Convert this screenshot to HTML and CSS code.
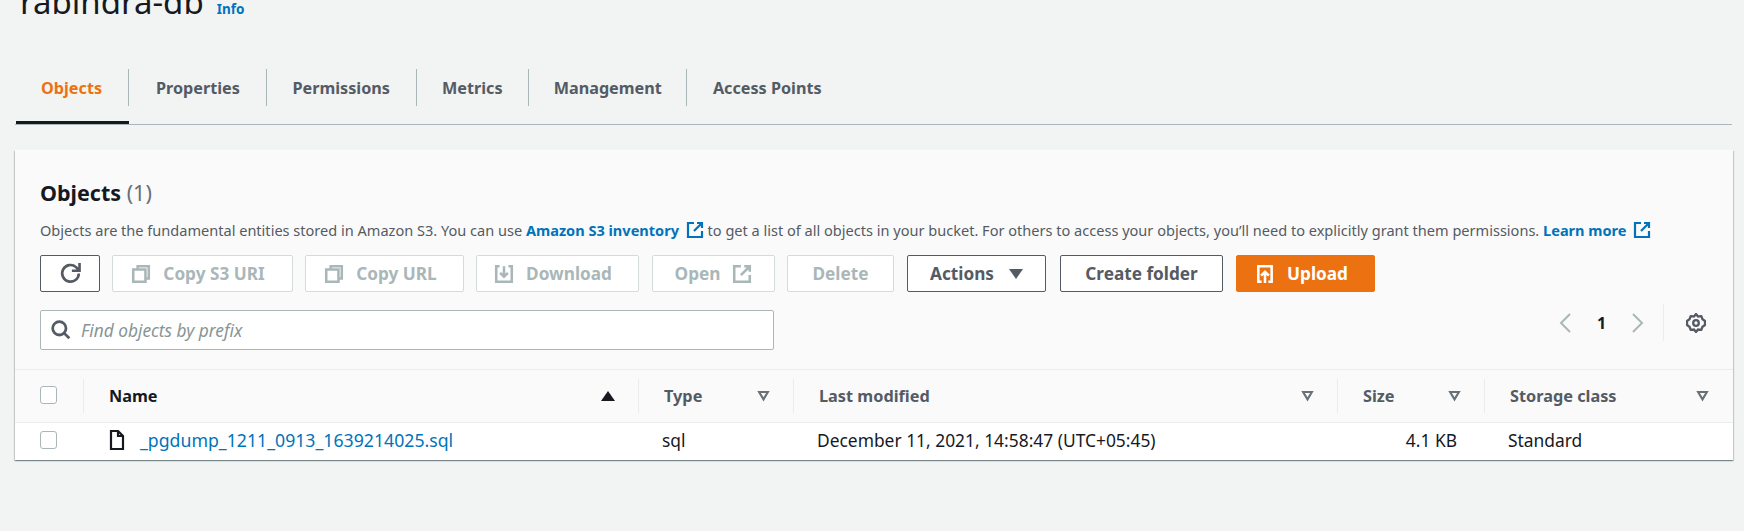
FILE: index.html
```html
<!DOCTYPE html>
<html lang="en">
<head>
  <meta charset="UTF-8">
  <title>rabindra-db</title>
  <link rel="stylesheet" href="styles.css">
</head>
<body>

<div class="title-row">
  <h1 class="bucket-name">rabindra-db</h1>
  <a class="info-link">Info</a>
</div>

<div class="tabs">
  <div class="tab tab-active"><span>Objects</span></div>
  <div class="tab tab-props"><span>Properties</span></div>
  <div class="tab"><span>Permissions</span></div>
  <div class="tab"><span>Metrics</span></div>
  <div class="tab tab-manage"><span>Management</span></div>
  <div class="tab tab-last"><span>Access Points</span></div>
</div>

<div class="card">

  <div class="card-head">
    <h2 class="card-title">Objects <span class="count">(1)</span></h2>
    <p class="desc">Objects are the fundamental entities stored in Amazon S3. You can use <a class="link">Amazon S3 inventory <svg class="ext" viewBox="0 0 18 18"><path d="M8 2H2v14h14v-6M11 2h5v5M16 2L8 10"/></svg></a> to get a list of all objects in your bucket. For others to access your objects, you’ll need to explicitly grant them permissions. <a class="link">Learn more <svg class="ext" viewBox="0 0 18 18"><path d="M8 2H2v14h14v-6M11 2h5v5M16 2L8 10"/></svg></a></p>

    <div class="actions">
      <button class="btn btn-refresh"><svg class="icon-big" viewBox="0 0 18 18"><path d="M15 9a6 6 0 1 1-2-4.600L15.500 7M15.500 1.500V7H10"/></svg></button>
      <button class="btn btn-off btn-s3"><svg class="icon" viewBox="0 0 18 18"><path d="M6 5V2h10v11h-3M2 5h11v11H2z"/></svg>Copy S3 URI</button>
      <button class="btn btn-off btn-url"><svg class="icon" viewBox="0 0 18 18"><path d="M6 5V2h10v11h-3M2 5h11v11H2z"/></svg>Copy URL</button>
      <button class="btn btn-off btn-down"><svg class="icon" viewBox="0 0 18 18"><path d="M5 2H2v14h14V2h-3M9 2v9M5.500 8L9 11.500 12.500 8"/></svg>Download</button>
      <button class="btn btn-off btn-open">Open<svg class="icon" viewBox="0 0 18 18"><path d="M8 2H2v14h14v-6M11 2h5v5M16 2L8 10"/></svg></button>
      <button class="btn btn-off btn-del">Delete</button>
      <button class="btn btn-on btn-act">Actions<span class="caret"></span></button>
      <button class="btn btn-on btn-folder">Create folder</button>
      <button class="btn btn-upload"><svg class="icon" viewBox="0 0 18 18"><path d="M6 16H3V2h12v14h-3M9 17V7M5.500 10.500L9 7l3.500 3.500"/></svg>Upload</button>
    </div>

    <div class="filter-row">
      <div class="search">
        <svg class="search-icon" viewBox="0 0 18 18"><circle cx="7.500" cy="7.500" r="6"/><path d="M11.800 11.800L16.500 16.500"/></svg>
        <span>Find objects by prefix</span>
      </div>
      <div class="pager">
        <svg class="chev" viewBox="0 0 12 20"><path d="M11 1L2 10l9 9"/></svg>
        <span class="page-num">1</span>
        <svg class="chev" viewBox="0 0 12 20"><path d="M1 1l9 9-9 9"/></svg>
      </div>
      <div class="settings">
        <svg class="gear" viewBox="0 0 20 20"><path d="M10 1l2 2.500 3.300-.3 1.200 3L19 8v4l-2.500 1.800-1.200 3-3.300-.3L10 19l-2-2.500-3.300.3-1.200-3L1 12V8l2.500-1.800 1.200-3 3.300.3z"/><circle cx="10" cy="10" r="2.800"/></svg>
      </div>
    </div>
  </div>

  <div class="row row-head">
    <div class="cell cell-check"><span class="checkbox"></span></div>
    <div class="cell cell-name">Name<span class="sort-up"></span></div>
    <div class="cell">Type<span class="sort"></span></div>
    <div class="cell">Last modified<span class="sort"></span></div>
    <div class="cell">Size<span class="sort"></span></div>
    <div class="cell cell-last">Storage class<span class="sort"></span></div>
  </div>

  <div class="row row-body">
    <div class="cell cell-check"><span class="checkbox"></span></div>
    <div class="cell cell-file">
      <svg class="file-icon" viewBox="0 0 16 20"><path d="M2 1h7l5 5v13H2zM9 1v5h5"/></svg>
      <a class="file-link">_pgdump_1211_0913_1639214025.sql</a>
    </div>
    <div class="cell">sql</div>
    <div class="cell">December 11, 2021, 14:58:47 (UTC+05:45)</div>
    <div class="cell cell-size">4.1 KB</div>
    <div class="cell">Standard</div>
  </div>

</div>

</body>
</html>
```

FILE: styles.css
```css
* {
  box-sizing: border-box;
}

body {
  margin: 0;
  height: 531px;
  overflow: hidden;
  background-color: #f2f3f3;
  font-family: "Noto Sans", "Open Sans", sans-serif;
  font-size: 14px;
  color: #16191f;
}

.title-row {
  display: flex;
  align-items: baseline;
  height: 15px;
  padding-left: 20px;
  gap: 13px;
}

.bucket-name {
  margin: -30px 0 0 0;
  font-size: 33px;
  line-height: 40px;
  font-weight: 400;
}

.info-link {
  color: #0073bb;
  font-size: 13.500px;
  font-weight: 700;
}

.tabs {
  display: flex;
  margin: 54px 12px 0 15px;
  height: 56px;
  border-bottom: 1px solid #aab7b8;
}

.tab {
  height: 55px;
  display: flex;
  align-items: flex-start;
  padding: 0;
  font-size: 16.200px;
  font-weight: 700;
  color: #545b64;
}

.tab span {
  display: flex;
  align-items: center;
  height: 37px;
  padding: 0 25.600px;
  border-right: 1px solid #aab7b8;
  white-space: nowrap;
}

.tab-props span {
  padding: 0 26px 0 27px;
}

.tab-manage span {
  padding: 0 24.500px;
}

.tab-last span {
  border-right: 0;
}

.tab-active {
  color: #ec7211;
  width: 113px;
  margin-left: 1px;
  border-bottom: 3px solid #16191f;
  height: 55px;
}

.tab-active span {
  width: 113px;
  padding: 0 0 0 25px;
}

.card {
  margin: 25px 11px 0 15px;
  background-color: #fafafa;
  box-shadow: 0 1px 1px 0 rgba(0, 28, 36, 0.3), 1px 1px 1px 0 rgba(0, 28, 36, 0.15), -1px 1px 1px 0 rgba(0, 28, 36, 0.15);
}

.card-head {
  padding: 31px 0 0 25px;
  height: 219px;
}

.card-title {
  margin: 0;
  font-size: 21.500px;
  line-height: 24px;
  font-weight: 700;
}

.count {
  font-weight: 400;
  color: #687078;
}

.desc {
  margin: 15px 0 0 0;
  font-size: 14.550px;
  line-height: 20px;
  color: #545b64;
  white-space: nowrap;
}

.link {
  color: #0073bb;
  font-weight: 700;
}

.ext {
  width: 18px;
  height: 18px;
  margin-left: 3px;
  vertical-align: -3px;
  fill: none;
  stroke: #0073bb;
  stroke-width: 2.200;
}

.actions {
  display: flex;
  gap: 12px;
  margin-top: 15px;
}

.btn {
  display: flex;
  align-items: center;
  justify-content: center;
  gap: 12px;
  height: 37px;
  padding: 0;
  background-color: #fff;
  border: 1px solid #545b64;
  border-radius: 2px;
  font-family: inherit;
  font-size: 17.200px;
  font-weight: 700;
  color: #545b64;
}

.icon {
  width: 20px;
  height: 20px;
  fill: none;
  stroke: currentColor;
  stroke-width: 2.300;
}

.icon-big {
  width: 25px;
  height: 25px;
  fill: none;
  stroke: currentColor;
  stroke-width: 1.900;
}

.btn-off {
  border-color: #d5dbdb;
  color: #aab7b8;
}

.btn-refresh { width: 60px; }
.btn-s3 { width: 181px; padding-right: 9px; }
.btn-url { width: 159px; padding-right: 8px; }
.btn-down { width: 163px; padding-right: 9px; }
.btn-open { width: 123px; margin-left: 1px; }
.btn-del { width: 107px; }
.btn-act { width: 139px; margin-left: 1px; }
.btn-folder { width: 163px; margin-left: 2px; }

.btn-upload {
  width: 139px;
  margin-left: 1px;
  padding-right: 8px;
  background-color: #ec7211;
  border-color: #ec7211;
  color: #fff;
}

.caret {
  width: 0;
  height: 0;
  margin-left: 3px;
  border-left: 7px solid transparent;
  border-right: 7px solid transparent;
  border-top: 10px solid #545b64;
}

.filter-row {
  display: flex;
  align-items: flex-start;
  margin-top: 18px;
}

.search {
  display: flex;
  align-items: center;
  gap: 10px;
  width: 734px;
  height: 40px;
  padding-left: 10px;
  background-color: #fff;
  border: 1px solid #aab7b8;
  border-radius: 2px;
  font-style: italic;
  font-size: 17.300px;
  color: #879596;
}

.search-icon {
  width: 20px;
  height: 20px;
  fill: none;
  stroke: #545b64;
  stroke-width: 2.500;
}

.pager {
  display: flex;
  align-items: center;
  gap: 26px;
  height: 37px;
  margin: -6px 0 0 785px;
  color: #16191f;
  font-weight: 700;
  font-size: 16px;
}

.chev {
  width: 12px;
  height: 20px;
  fill: none;
  stroke: #aab7b8;
  stroke-width: 2;
}

.settings {
  display: flex;
  align-items: center;
  height: 37px;
  margin: -6px 0 0 19px;
  padding-left: 22px;
  border-left: 1px solid #eaeded;
}

.gear {
  width: 20px;
  height: 20px;
  fill: none;
  stroke: #545b64;
  stroke-width: 2.300;
}

.row {
  display: grid;
  grid-template-columns: 68px 555px 155px 544px 147px 250px;
  align-items: center;
}

.row-head {
  height: 54px;
  border-top: 1px solid #eaeded;
  border-bottom: 1px solid #eaeded;
  font-size: 16.300px;
  font-weight: 700;
  color: #545b64;
}

.row-body {
  height: 37px;
  padding-bottom: 3px;
  background-color: #fff;
  font-size: 17.400px;
  color: #16191f;
}

.cell {
  display: flex;
  align-items: center;
  justify-content: space-between;
  padding: 0 24px;
  white-space: nowrap;
}

.row-head .cell {
  height: 34px;
  padding: 0 23px 0 25px;
  border-left: 1px solid #eaeded;
}

.row-head .cell.cell-last {
  padding-right: 25px;
}

.cell.cell-check,
.row-head .cell.cell-check {
  padding: 0 0 0 25px;
  border-left: 0;
}

.row-head .checkbox {
  margin-bottom: 3px;
}

.cell-name {
  color: #16191f;
}

.cell-file {
  justify-content: flex-start;
  gap: 15px;
  padding-left: 26px;
}

.cell-size {
  justify-content: flex-end;
  padding-right: 27px;
}

.checkbox {
  display: block;
  width: 17px;
  height: 18px;
  background-color: #fff;
  border: 1px solid #aab7b8;
  border-radius: 3px;
}

.sort-up {
  width: 0;
  height: 0;
  border-left: 7px solid transparent;
  border-right: 7px solid transparent;
  border-bottom: 10px solid #16191f;
}

.sort {
  width: 13px;
  height: 11px;
  background-color: #687078;
  clip-path: polygon(0 0, 100% 0, 50% 100%, 0 0, 30% 22%, 50% 62%, 70% 22%, 30% 22%);
}

.file-icon {
  width: 16px;
  height: 20px;
  fill: none;
  stroke: #16191f;
  stroke-width: 2.200;
}

.file-link {
  color: #0073bb;
  font-size: 17.700px;
}
```
